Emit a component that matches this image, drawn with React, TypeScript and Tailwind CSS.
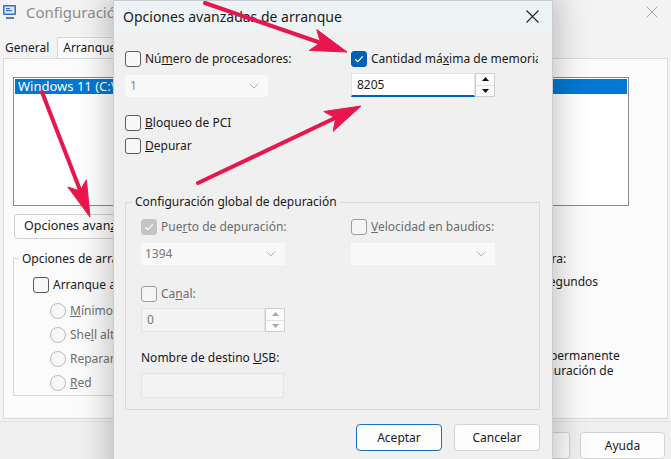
import React from 'react';

const Check = ({ checked = false, disabled = false }: { checked?: boolean; disabled?: boolean }) => {
  let cls = 'border-[#5b5b5b] bg-[#f7f7f7]';
  if (checked && !disabled) cls = 'border-[#005fb8] bg-[#005fb8]';
  if (checked && disabled) cls = 'border-[#c4c4c4] bg-[#c4c4c4]';
  if (!checked && disabled) cls = 'border-[#9e9e9e] bg-[#f5f5f5]';
  return (
    <span className={`flex h-[16px] w-[16px] shrink-0 items-center justify-center rounded-[3px] border ${cls}`}>
      {checked && (
        <svg width="10" height="8" viewBox="0 0 10 8">
          <path d="M1.2 4.2 3.7 6.6 8.8 1.4" fill="none" stroke="white" strokeWidth="1.2" />
        </svg>
      )}
    </span>
  );
};

const Radio = ({ children }: { children: React.ReactNode }) => (
  <div className="flex h-[16px] items-center gap-[4px] text-[#6f6f6f]">
    <span className="h-[16px] w-[16px] shrink-0 rounded-full border border-[#b9b9b9] bg-[#f7f7f7]" />
    <span>{children}</span>
  </div>
);

const Chevron = () => (
  <svg width="10" height="6" viewBox="0 0 10 6">
    <path d="M0.5 0.5 5 5 9.5 0.5" fill="none" stroke="#b0b0b0" strokeWidth="1" />
  </svg>
);

const SpinArrows = ({ color }: { color: string }) => (
  <div className="flex h-full w-[20px] flex-col border border-[#cfcfcf] bg-[#fbfbfb]">
    <div className="flex flex-1 items-center justify-center border-b border-[#e2e2e2]">
      <svg width="7" height="4" viewBox="0 0 7 4">
        <path d="M0 4 3.5 0 7 4Z" fill={color} />
      </svg>
    </div>
    <div className="flex flex-1 items-center justify-center">
      <svg width="7" height="4" viewBox="0 0 7 4">
        <path d="M0 0 3.5 4 7 0Z" fill={color} />
      </svg>
    </div>
  </div>
);

const Arrow = ({ d, head }: { d: string; head: string }) => (
  <g fill="#e8164c" stroke="#e8164c">
    <path d={d} strokeWidth="4" strokeLinecap="round" fill="none" />
    <polygon points={head} strokeWidth="1" strokeLinejoin="round" />
  </g>
);

const AdvancedDialog = () => (
  <div className="absolute left-[113px] top-0 h-[475px] w-[440px] overflow-hidden border border-[#c9cdd0] bg-[#f0f0f0] shadow-[0_0_28px_6px_rgba(0,0,0,0.22)]">
    <div className="flex h-[31px] items-center justify-between bg-[#eef4f5] pl-[9px] pr-[13px]">
      <span className="text-[14px] text-[#1b1b1b]">Opciones avanzadas de arranque</span>
      <svg width="13" height="13" viewBox="0 0 13 13">
        <path d="M0.5 0.5 12.5 12.5M12.5 0.5 0.5 12.5" stroke="#222" strokeWidth="1.1" />
      </svg>
    </div>

    <div className="px-[11px] pt-[19px] text-[12px] text-[#1a1a1a]">
      <div className="grid grid-cols-[226px_1fr]">
        <div>
          <label className="flex h-[16px] items-center gap-[4px]">
            <Check />
            <span>
              Nú<u>m</u>ero de procesadores:
            </span>
          </label>
          <div className="mt-[8px] flex h-[22px] w-[143px] items-center justify-between rounded-[3px] bg-[#f9f9f9] pl-[5px] pr-[9px] text-[#8a8a8a]">
            <span>1</span>
            <Chevron />
          </div>
        </div>
        <div>
          <label className="flex h-[16px] w-[187px] items-center gap-[4px] overflow-hidden whitespace-nowrap">
            <Check checked />
            <span>
              Cantidad má<u>x</u>ima de memoria
            </span>
          </label>
          <div className="mt-[6px] flex h-[24px]">
            <div className="flex w-[124px] items-center border border-b-2 border-[#e3e3e3] border-b-[#005fb8] bg-white pl-[5px]">
              8205
            </div>
            <SpinArrows color="#111" />
          </div>
        </div>
      </div>

      <label className="mt-[18px] flex h-[16px] items-center gap-[4px]">
        <Check />
        <span>
          <u>B</u>loqueo de PCI
        </span>
      </label>
      <label className="mt-[7px] flex h-[16px] items-center gap-[4px]">
        <Check />
        <span>
          <u>D</u>epurar
        </span>
      </label>

      <fieldset className="mt-[40px] w-[415px] border border-[#dadada]">
        <legend className="ml-[6px] px-[3px] leading-[16px]">Configuración global de depuración</legend>
        <div className="px-[15px] pb-[11px] pt-[9px]">
          <div className="grid grid-cols-[210px_1fr]">
            <div>
              <label className="flex h-[16px] items-center gap-[4px] text-[#6d6d6d]">
                <Check checked disabled />
                <span>
                  Pue<u>r</u>to de depuración:
                </span>
              </label>
              <div className="mt-[8px] flex h-[22px] w-[144px] items-center justify-between bg-[#f9f9f9] pl-[4px] pr-[9px] text-[#777]">
                <span>1394</span>
                <Chevron />
              </div>
            </div>
            <div>
              <label className="flex h-[16px] items-center gap-[4px] text-[#6d6d6d]">
                <Check disabled />
                <span>
                  <u>V</u>elocidad en baudios:
                </span>
              </label>
              <div className="mt-[8px] flex h-[22px] w-[144px] items-center justify-end bg-[#f9f9f9] pr-[9px]">
                <Chevron />
              </div>
            </div>
          </div>

          <label className="mt-[21px] flex h-[16px] items-center gap-[4px] text-[#6d6d6d]">
            <Check disabled />
            <span>
              Ca<u>n</u>al:
            </span>
          </label>
          <div className="mt-[6px] flex h-[24px]">
            <div className="flex w-[124px] items-center border border-[#e2e2e2] bg-[#f3f3f3] pl-[5px] text-[#777]">0</div>
            <SpinArrows color="#a9a9a9" />
          </div>

          <div className="mt-[18px] flex h-[16px] items-center whitespace-pre">
            <span>Nombre de destino </span>
            <u>U</u>
            <span>SB:</span>
          </div>
          <div className="mt-[7px] h-[25px] w-[143px] border border-[#e4e4e4] bg-[#f3f3f3]" />
        </div>
      </fieldset>

      <div className="mt-[14px] flex w-[415px] justify-end gap-[12px]">
        <button className="h-[27px] w-[86px] rounded-[4px] border border-[#1b6fbf] bg-[#fdfdfd]">Aceptar</button>
        <button className="h-[27px] w-[86px] rounded-[4px] border border-[#d3d3d3] bg-[#fdfdfd]">Cancelar</button>
      </div>
    </div>
  </div>
);

const SystemConfig = () => (
  <div className="flex h-full flex-col bg-[#f3f3f3] text-[12px] text-[#1a1a1a]">
    <div className="flex h-[25px] items-center justify-between pl-[2px] pr-[13px]">
      <div className="flex items-center gap-[8px]">
        <svg width="16" height="16" viewBox="0 0 16 16">
          <rect x="1" y="1" width="13" height="10" rx="1" fill="#2f6fc6" />
          <rect x="2.5" y="2.5" width="10" height="7" fill="#dce9f8" />
          <rect x="4" y="4" width="4" height="1.2" fill="#2f6fc6" />
          <rect x="4" y="6" width="6" height="1.2" fill="#2f6fc6" />
          <path d="M4 13h8v2H4z" fill="#5a7fb0" />
        </svg>
        <span className="text-[15px] text-[#8d8d8d]">Configuración del sistema</span>
      </div>
      <svg width="12" height="12" viewBox="0 0 12 12">
        <path d="M0.5 0.5 11.5 11.5M11.5 0.5 0.5 11.5" stroke="#a8a8a8" strokeWidth="1" />
      </svg>
    </div>

    <div className="mt-[12px] flex h-[21px] items-end pl-[2px]">
      <div className="flex h-[19px] items-center px-[3px]">General</div>
      <div className="ml-[5px] flex h-[21px] items-center border border-b-0 border-[#d9d9d9] bg-[#fbfbfb] px-[5px]">
        Arranque
      </div>
    </div>

    <div className="mx-[3px] h-[365px] border border-[#d9d9d9] bg-[#fbfbfb] pl-[9px]">
      <div className="mt-[18px] h-[129px] w-[616px] border border-[#8a8a8a] bg-white p-[1px] text-[13px]">
        <div className="h-[15px] bg-[#0078d4] pl-[3px] leading-[15px] text-white">
          Windows 11 (C:\WINDOWS) : Sistema operativo actual
        </div>
      </div>
      <button className="mt-[8px] ml-[1px] h-[25px] w-[150px] rounded-[4px] border border-[#d0d0d0] bg-[#fdfdfd] pl-[9px] text-left text-[12.5px]">
        Opciones avan<u>z</u>adas...
      </button>

      <div className="mt-[12px] flex">
        <fieldset className="h-[145px] w-[340px] border border-[#d6d6d6]">
          <legend className="ml-[5px] px-[3px] leading-[16px]">Opciones de arranque</legend>
          <div className="pl-[19px] pt-[10px]">
            <label className="flex h-[16px] items-center gap-[4px]">
              <Check />
              <span>Arranque a prueba de errores</span>
            </label>
            <div className="ml-[17px] mt-[10px] flex flex-col gap-[8px]">
              <Radio>
                <u>M</u>ínimo
              </Radio>
              <Radio>
                She<u>l</u>l alternativo
              </Radio>
              <Radio>Reparar Active</Radio>
              <Radio>
                <u>R</u>ed
              </Radio>
            </div>
          </div>
        </fieldset>

        <div className="ml-[109px] w-[190px]">
          <div className="flex h-[16px] items-center whitespace-nowrap">Tiempo de espera:</div>
          <div className="mt-[7px] flex h-[16px] items-center gap-[6px] whitespace-nowrap">
            <span className="w-[75px]">30</span>
            <span>segundos</span>
          </div>
          <div className="ml-[-5px] mt-[58px] flex gap-[4px] leading-[15px]">
            <Check />
            <span className="whitespace-nowrap">
              Convertir en permanente
              <br />
              toda la configuración de
              <br />
              arranque
            </span>
          </div>
        </div>
      </div>
    </div>

    <div className="mt-[2px] flex flex-1 items-start justify-end gap-[10px] border-t border-[#e2e2e2] bg-[#f0f0f0] pr-[6px] pt-[10px]">
      <button className="h-[27px] w-[86px] rounded-[4px] border border-[#d3d3d3] bg-[#fdfdfd]">Aplicar</button>
      <button className="h-[27px] w-[85px] rounded-[4px] border border-[#d3d3d3] bg-[#fdfdfd]">Ayuda</button>
    </div>
  </div>
);

export default function App() {
  return (
    <div className="relative h-[459px] w-[671px] overflow-hidden font-['Noto_Sans',sans-serif]">
      <SystemConfig />
      <AdvancedDialog />
      <svg className="pointer-events-none absolute left-0 top-0" width="671" height="459" viewBox="0 0 671 459">
        <Arrow d="M205 3 L321 43" head="347,52 309.4,50.4 320.6,42.6 316.8,29.6" />
        <Arrow d="M42 92 L80 190" head="90,217 67.8,187 80,190.9 86.4,179.8" />
        <Arrow d="M198 183 L335 118" head="361,106 323.8,111.5 335.7,118 333.2,131.3" />
      </svg>
    </div>
  );
}
